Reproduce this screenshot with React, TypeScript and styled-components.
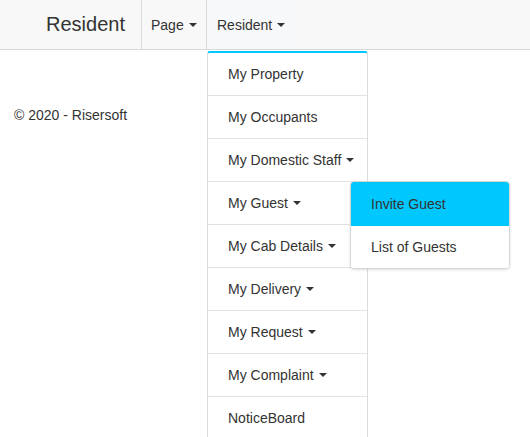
import React from "react";
import styled, { createGlobalStyle } from "styled-components";

const Global = createGlobalStyle`
  html, body { margin: 0; padding: 0; background: #fff; }
  body { font-family: "Liberation Sans", Arial, sans-serif; font-size: 14px; color: #333; }
  * { box-sizing: border-box; }
`;

const Page = styled.div`
  position: relative;
  width: 530px;
  height: 437px;
  overflow: hidden;
`;

const Navbar = styled.nav`
  display: flex;
  height: 50px;
  background: #f8f8f8;
  border-bottom: 1px solid #d9d9d9;
`;

const Brand = styled.div`
  display: flex;
  align-items: center;
  width: 142px;
  padding-left: 46px;
  font-size: 20px;
  color: #333;
  border-right: 1px solid #d9d9d9;
`;

const NavItem = styled.div<{ $open?: boolean }>`
  position: relative;
  display: flex;
  align-items: center;
  padding: 0 10px 0 ${(p) => (p.$open ? "10px" : "9px")};
  height: 49px;
  color: #333;
  background: ${(p) => (p.$open ? "#f7f8fa" : "transparent")};
  border-right: ${(p) => (p.$open ? "none" : "1px solid #d9d9d9")};
  width: ${(p) => (p.$open ? "auto" : "65px")};
`;

const Caret = styled.span`
  display: inline-block;
  width: 0;
  height: 0;
  margin-left: 5px;
  border-top: 4px solid #333;
  border-left: 4px solid transparent;
  border-right: 4px solid transparent;
  vertical-align: middle;
`;

const Menu = styled.ul`
  position: absolute;
  left: 207px;
  top: 51px;
  width: 161px;
  margin: 0;
  padding: 0;
  list-style: none;
  background: #fff;
  border: 1px solid #dcdcdc;
  border-top: 2px solid #00c8ff;
  border-radius: 3px 3px 0 0;
  z-index: 2;
`;

const MenuItem = styled.li`
  display: flex;
  align-items: center;
  height: 43px;
  padding-left: 20px;
  border-bottom: 1px solid #e3e3e3;
  color: #333;
  white-space: nowrap;
`;

const SubMenu = styled.ul`
  position: absolute;
  left: 350px;
  top: 181px;
  width: 160px;
  margin: 0;
  padding: 0;
  list-style: none;
  background: #fff;
  border: 1px solid #d6d6d6;
  border-radius: 4px;
  box-shadow: 0 1px 3px rgba(0, 0, 0, 0.12);
  overflow: hidden;
  z-index: 3;
`;

const SubItem = styled.li<{ $active?: boolean }>`
  display: flex;
  align-items: center;
  height: ${(p) => (p.$active ? "44px" : "42px")};
  padding-left: 20px;
  background: ${(p) => (p.$active ? "#00c8ff" : "#fff")};
  color: #333;
`;

const Footer = styled.footer`
  padding: 57px 0 0 14px;
  font-size: 14px;
  color: #333;
`;

const items: { label: string; caret?: boolean }[] = [
  { label: "My Property" },
  { label: "My Occupants" },
  { label: "My Domestic Staff", caret: true },
  { label: "My Guest", caret: true },
  { label: "My Cab Details", caret: true },
  { label: "My Delivery", caret: true },
  { label: "My Request", caret: true },
  { label: "My Complaint", caret: true },
  { label: "NoticeBoard" },
];

export default function App() {
  return (
    <Page>
      <Global />
      <Navbar>
        <Brand>Resident</Brand>
        <NavItem>
          Page
          <Caret />
        </NavItem>
        <NavItem $open>
          Resident
          <Caret />
        </NavItem>
      </Navbar>
      <Footer>© 2020 - Risersoft</Footer>
      <Menu>
        {items.map((it) => (
          <MenuItem key={it.label}>
            {it.label}
            {it.caret && <Caret />}
          </MenuItem>
        ))}
      </Menu>
      <SubMenu>
        <SubItem $active>Invite Guest</SubItem>
        <SubItem>List of Guests</SubItem>
      </SubMenu>
    </Page>
  );
}
